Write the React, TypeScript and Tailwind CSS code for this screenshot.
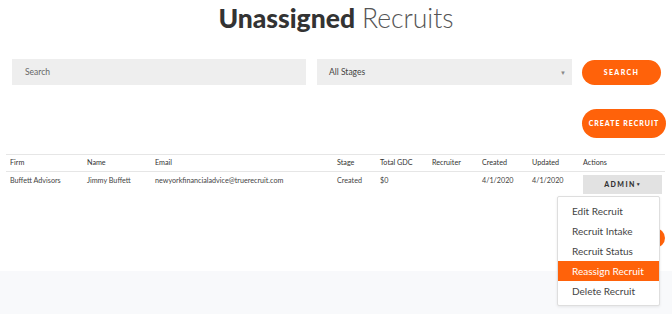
import React from "react";

const cols = "grid grid-cols-[77px_68px_182px_43px_52px_50px_50px_51px_1fr]";

export default function App() {
  const headers = ["Firm", "Name", "Email", "Stage", "Total GDC", "Recruiter", "Created", "Updated", "Actions"];
  const row = ["Buffett Advisors", "Jimmy Buffett", "newyorkfinancialadvice@truerecruit.com", "Created", "$0", "", "4/1/2020", "4/1/2020"];
  return (
    <div className="relative w-[672px] h-[314px] overflow-hidden bg-white font-['Lato','Liberation_Sans',sans-serif]">
      <div className="h-[271px] bg-white">
        <h1 className="pt-[5px] text-center text-[26.5px] leading-[26px] text-[#333]">
          <span className="font-black">Unassigned</span>{" "}
          <span className="font-light text-[#555]">Recruits</span>
        </h1>
        <div className="mt-[28px] flex items-center pl-[12px]">
          <div className="flex h-[26px] w-[294px] items-center bg-[#eeeeee] pl-[13px] text-[8.5px] text-[#666]">
            Search
          </div>
          <div className="ml-[11px] flex h-[26px] w-[255px] items-center justify-between bg-[#eeeeee] pl-[12px] pr-[6px] text-[8.5px] text-[#444]">
            <span>All Stages</span>
            <span className="text-[6px] text-[#888]">▼</span>
          </div>
          <div className="ml-[10px] flex h-[25px] w-[79px] items-center justify-center rounded-full bg-[#ff620a] text-[7px] font-black tracking-[1.4px] text-white">
            SEARCH
          </div>
        </div>
        <div className="mt-[24px] flex justify-end pr-[6px]">
          <div className="flex h-[29px] w-[84px] items-center justify-center rounded-full bg-[#ff620a] text-[7px] font-black tracking-[1px] text-white">
            CREATE RECRUIT
          </div>
        </div>
        <div className="mx-[6px] mt-[16px] w-[659px] border-t border-[#e6e6e6] text-[7.2px]">
          <div className={`${cols} h-[17px] items-center border-b border-[#e6e6e6] text-[#333]`}>
            {headers.map((h) => (
              <div key={h} className="pl-[4px]">{h}</div>
            ))}
          </div>
          <div className={`${cols} pt-[4px] text-[#444]`}>
            {row.map((c, i) => (
              <div key={i} className="pl-[4px]">{c}</div>
            ))}
            <div className="pl-[4px] -mt-[1px]">
              <div className="flex h-[19px] w-[79px] items-center justify-center bg-[#e2e2e2] text-[7px] font-black tracking-[1.4px] text-[#333]">
                ADMIN<span className="text-[5px] tracking-normal">▼</span>
              </div>
            </div>
          </div>
        </div>
      </div>
      <div className="h-[43px] bg-[#f8f9fb]" />
      <div className="absolute left-[582px] top-[228px] h-[20px] w-[83px] rounded-full bg-[#ff620a]" />
      <div className="absolute left-[557px] top-[196px] w-[103px] rounded-[2px] border border-[#dedede] bg-white py-[4px] text-[10px] text-[#444] shadow-[0_1px_3px_rgba(0,0,0,0.08)]">
        {["Edit Recruit", "Recruit Intake", "Recruit Status", "Reassign Recruit", "Delete Recruit"].map((t) => (
          <div
            key={t}
            className={`flex h-[20px] items-center pl-[14px] ${t === "Reassign Recruit" ? "bg-[#ff620a] text-white" : ""}`}
          >
            {t}
          </div>
        ))}
      </div>
    </div>
  );
}
